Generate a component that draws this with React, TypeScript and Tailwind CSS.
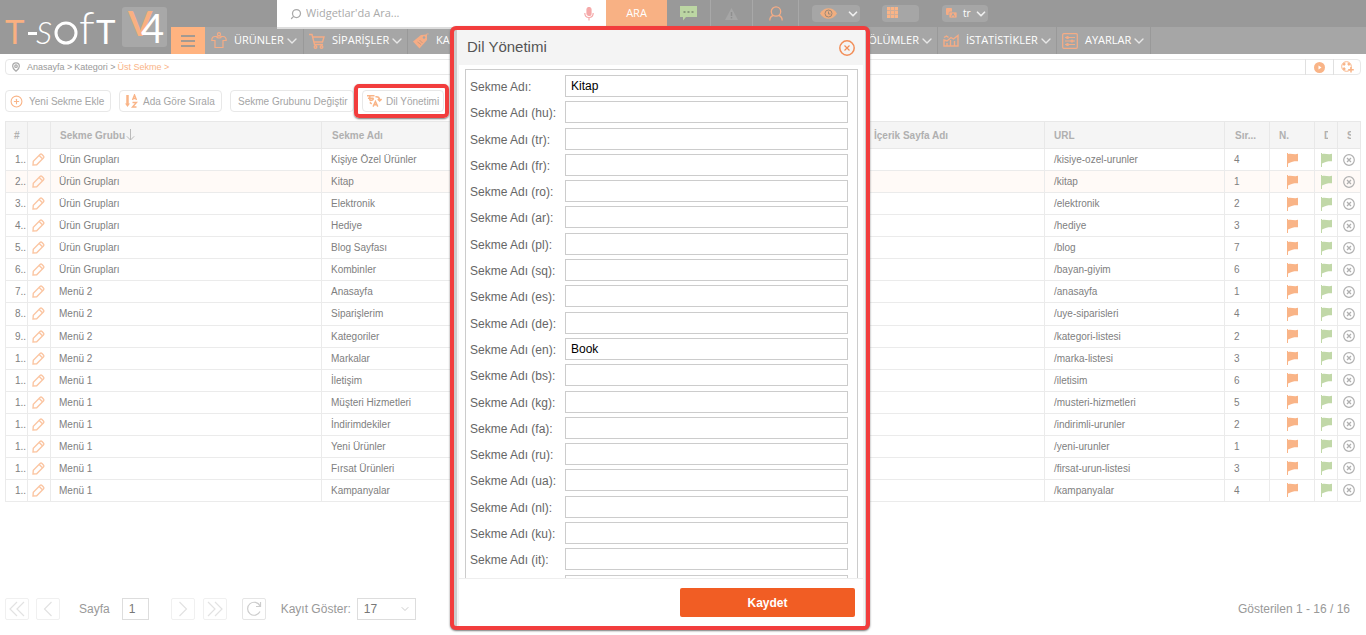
import { ReactNode } from "react";
import { Search, ChevronDown, CirclePlus, MapPin } from "lucide-react";

type Tab = { no: string; group: string; name: string; url: string; order: number };

const tabs: Tab[] = [
    { no: "1..", group: "Ürün Grupları", name: "Kişiye Özel Ürünler", url: "/kisiye-ozel-urunler", order: 4 },
    { no: "2..", group: "Ürün Grupları", name: "Kitap", url: "/kitap", order: 1 },
    { no: "3..", group: "Ürün Grupları", name: "Elektronik", url: "/elektronik", order: 2 },
    { no: "4..", group: "Ürün Grupları", name: "Hediye", url: "/hediye", order: 3 },
    { no: "5..", group: "Ürün Grupları", name: "Blog Sayfası", url: "/blog", order: 7 },
    { no: "6..", group: "Ürün Grupları", name: "Kombinler", url: "/bayan-giyim", order: 6 },
    { no: "7..", group: "Menü 2", name: "Anasayfa", url: "/anasayfa", order: 1 },
    { no: "8..", group: "Menü 2", name: "Siparişlerim", url: "/uye-siparisleri", order: 4 },
    { no: "9..", group: "Menü 2", name: "Kategoriler", url: "/kategori-listesi", order: 2 },
    { no: "1..", group: "Menü 2", name: "Markalar", url: "/marka-listesi", order: 3 },
    { no: "1..", group: "Menü 1", name: "İletişim", url: "/iletisim", order: 6 },
    { no: "1..", group: "Menü 1", name: "Müşteri Hizmetleri", url: "/musteri-hizmetleri", order: 5 },
    { no: "1..", group: "Menü 1", name: "İndirimdekiler", url: "/indirimli-urunler", order: 2 },
    { no: "1..", group: "Menü 1", name: "Yeni Ürünler", url: "/yeni-urunler", order: 1 },
    { no: "1..", group: "Menü 1", name: "Fırsat Ürünleri", url: "/firsat-urun-listesi", order: 3 },
    { no: "1..", group: "Menü 1", name: "Kampanyalar", url: "/kampanyalar", order: 4 },
];

const languages = ["", "hu", "tr", "fr", "ro", "ar", "pl", "sq", "es", "de", "en", "bs", "kg", "fa", "ru", "ua", "nl", "ku", "it", "bg"];
const values: Record<string, string> = { "": "Kitap", en: "Book" };

const Logo = () => (
    <svg width="171" height="54" viewBox="0 0 171 54" role="img" aria-label="T-Soft V4" fontFamily="Lato, sans-serif">
        <rect x="122" y="7" width="45" height="40" rx="3" fill="#a8a8a8" />
        <text x="5" y="44" fontSize="33" fill="#f9b081">T</text>
        <rect x="28" y="32" width="9" height="3" fill="#fff" />
        <text x="36" y="44" fontSize="32" fontStyle="italic" fontWeight="300" fill="#fff">S</text>
        <circle cx="66" cy="33" r="10" fill="none" stroke="#fff" strokeWidth="3" />
        <text x="79" y="44" fontSize="46" fontWeight="300" fill="#fff">f</text>
        <text x="96" y="44" fontSize="33" fill="#fff">T</text>
        <text>
            <tspan x="128" y="36" fontSize="35" fontWeight="700" fill="#f9b081">V</tspan>
            <tspan x="141" y="43" fontSize="40" fontWeight="400" fill="#fff">4</tspan>
        </text>
    </svg>
);

const ShirtIcon = () => (
    <svg width="16" height="17" viewBox="0 0 16 17" fill="none" stroke="#f5ac85" strokeWidth="1.2">
        <circle cx="8" cy="2.200" r="1.500" />
        <path d="M5.500 4.500H4C2 4.500.8 5.800.8 8.500H4v7h8v-7h3.200c0-2.700-1.200-4-3.200-4h-1.500c-.5 2-4.500 2-5 0zM5.500 4.500 8 3.700l2.500.8" />
    </svg>
);

const CartIcon = () => (
    <svg width="16" height="16" viewBox="0 0 16 16" fill="none" stroke="#f5ac85" strokeWidth="1.4">
        <path d="M0 1.500h3l2.500 10h8.500M3.800 4h11.200l-1.500 5H5" />
        <circle cx="6.500" cy="14" r="1.300" />
        <circle cx="12.500" cy="14" r="1.300" />
    </svg>
);

const TagIcon = () => (
    <svg width="16" height="16" viewBox="0 0 16 16">
        <path d="M0 8.500 8 2l6-.5L14 7l-7.500 8.500z" fill="#f5ac85" />
        <path d="m4.500 9 3.500 2.500M6.500 7l3 3" stroke="#c99a80" />
        <path d="M10.500 5.500c1-3 3-5 5-4.500" fill="none" stroke="#f5ac85" />
        <circle cx="11" cy="4.500" r="1.200" fill="#a6a6a6" />
    </svg>
);

const StatsIcon = () => (
    <svg width="16" height="13" viewBox="0 0 16 13" fill="none" stroke="#f5ac85" strokeWidth="1.4">
        <path d="M1 12h14V1.500L10.500 5 8 3.500 4 7 1 6z" />
        <path d="M1 3.500 3.500 2l2 1.500M4 12V9m3.500 3V6m4 6V7" />
    </svg>
);

const SettingsIcon = () => (
    <svg width="16" height="16" viewBox="0 0 16 16" fill="none" stroke="#f5ac85" strokeWidth="1.2">
        <rect x=".7" y=".7" width="14.600" height="14.600" rx="1" />
        <path d="M3 4.500h10M3 8h10M3 11.500h10" />
        <circle cx="5.500" cy="4.500" r="1" />
        <circle cx="10" cy="8" r="1" />
        <circle cx="5.500" cy="11.500" r="1" />
    </svg>
);

const TranslateIcon = () => (
    <svg width="15" height="14" viewBox="0 0 16 14" fill="none" stroke="#f9b487" strokeWidth="1.6">
        <path d="M0 1.500h8M1 4h6M3 1.500v5M3 6.500c3 0 4-1 3.500-2.500" />
        <path d="M9 2.500c3-.5 4.500 1 4.500 4M11.500 5l2 2 2-2M3 8.500 5 10" />
        <path d="m6.500 13 2.500-5.500L11.500 13M7.500 11h3" />
    </svg>
);

const SortIcon = () => (
    <svg width="13" height="14" viewBox="0 0 13 14" fill="none" stroke="#f9b487">
        <path d="M2.500 1v9" strokeWidth="2.500" />
        <path d="M0 9.500h5L2.500 13z" fill="#f9b487" stroke="none" />
        <path d="M7.500 6 9.500 1l2 5M8 4.500h3M7.500 8.500h4L7.500 13h4" strokeWidth="1.400" />
    </svg>
);

const PencilIcon = () => (
    <svg width="13" height="13" viewBox="0 0 13 13" fill="none" stroke="#fbc6a3" strokeWidth="1.400">
        <path d="m1 12 .3-3.700L8 1.600c.6-.6 1.400-.6 2 0l1.400 1.400c.6.600.6 1.400 0 2L4.700 11.700zM7.200 2.600l3.200 3.200" />
    </svg>
);

const FlagIcon = ({ color }: { color: string }) => (
    <svg width="11" height="14" viewBox="0 0 11 14" fill={color}>
        <path d="M0 0h1v14H0z" />
        <path d="M1 1C4-.2 7 2 11 .8v7.500C8 8 5 8.500 1 10.500z" />
    </svg>
);

const RemoveIcon = () => (
    <svg width="12" height="12" viewBox="0 0 12 12" fill="none" stroke="#b0b0b0">
        <circle cx="6" cy="6" r="5.300" strokeWidth="1.200" />
        <path d="m4 4 4 4m0-4L4 8" strokeWidth="1.300" />
    </svg>
);

const NavItem = ({ icon, label, className }: { icon?: ReactNode; label: string; className: string }) => (
    <a href="#" className={`flex shrink-0 items-center border-r border-[#999] text-[11px] font-medium text-white ${className}`}>
        {icon}
        <span className="ml-[7px]">{label}</span>
        <ChevronDown size={16} strokeWidth={2} className="shrink-0 text-[#e8e8e8]" />
    </a>
);

const Header = () => (
    <header className="flex h-[54px] bg-[#999] font-['Open_Sans',sans-serif]">
        <a href="#" className="w-[171px] shrink-0">
            <Logo />
        </a>
        <div className="flex min-w-0 flex-1 flex-col">
            <div className="flex h-[27px] items-start pl-[106px]">
                <div className="z-10 flex h-[29px] w-[329px] shrink-0 items-center border-b-2 border-[#ddd] bg-white pr-3 pl-[13px]">
                    <Search size={12} strokeWidth={2.5} className="-scale-x-100 text-[#aaa]" />
                    <input type="text" aria-label="Widget ara" placeholder="Widgetlar'da Ara..." className="ml-1 min-w-0 flex-1 text-[11px] outline-none placeholder:text-[#aaa]" />
                    <svg width="10" height="14" viewBox="0 0 10 14" fill="none" stroke="#f5a9a9" strokeWidth="1.200">
                        <rect x="3" y=".5" width="4" height="8" rx="2" fill="#f5a9a9" />
                        <path d="M.8 6c0 6 8.400 6 8.400 0M5 10.500v3" />
                    </svg>
                </div>
                <button className="h-[27px] w-[61px] shrink-0 bg-[#f8b184] text-[11px] font-medium text-white">ARA</button>
                <button aria-label="Mesajlar" className="flex h-[27px] w-11 shrink-0 items-center justify-center border-r border-[#a8a8a8]">
                    <svg width="17" height="15" viewBox="0 0 17 15">
                        <path d="M0 0h17v11H6l-3 3.500V11H0z" fill="#bcd6a3" />
                        <path d="M3.500 5h2v2h-2zM7.500 5h2v2h-2zM11.500 5h2v2h-2z" fill="#8a9a7c" />
                    </svg>
                </button>
                <button aria-label="Uyarılar" className="flex h-[27px] w-[42px] shrink-0 items-center justify-center border-r border-[#a8a8a8]">
                    <svg width="13" height="12" viewBox="0 0 13 12">
                        <path d="M6.500 0 13 12H0z" fill="#a6a6a6" />
                        <path d="M6.500 4v4M6.500 9v1.500" stroke="#8f8f8f" strokeWidth="1.500" />
                    </svg>
                </button>
                <button aria-label="Hesap" className="flex h-[27px] w-[46px] shrink-0 items-center justify-center border-r border-[#a8a8a8]">
                    <svg width="14" height="15" viewBox="0 0 14 15" fill="none" stroke="#f5ac85" strokeWidth="1.300">
                        <circle cx="7" cy="5.500" r="4.700" />
                        <path d="M.8 14.500c0-3 1.500-4.500 3.500-5m5.400 0c2 .5 3.500 2 3.500 5" />
                    </svg>
                </button>
                <button aria-label="Görünüm" className="mt-[5px] ml-[13px] flex h-[17px] w-12 shrink-0 items-center justify-between rounded-sm bg-[#a6a6a6] pl-2 text-white">
                    <svg width="17" height="11" viewBox="0 0 17 11">
                        <path d="M0 5.500C4-1.500 13-1.500 17 5.500c-4 7-13 7-17 0z" fill="#f0ae80" />
                        <circle cx="8.500" cy="5.500" r="3.500" fill="none" stroke="#9c8877" />
                        <path d="M8.500 3.500v2.500h2" fill="none" stroke="#9c8877" />
                    </svg>
                    <ChevronDown size={14} strokeWidth={3} className="text-[#eee]" />
                </button>
                <button aria-label="Widgetlar" className="mt-[5px] ml-[22px] flex h-[17px] w-[37px] shrink-0 items-start rounded-sm bg-[#a6a6a6] pt-0.5 pl-[5px]">
                    <svg width="11" height="11" viewBox="0 0 11 11" fill="#f9b487">
                        <path d="M0 0h11v11H0z" opacity=".5" />
                        <path d="M0 0h3v3H0zM4 0h3v3H4zM8 0h3v3H8zM0 4h3v3H0zM4 4h3v3H4zM8 4h3v3H8zM0 8h3v3H0zM4 8h3v3H4zM8 8h3v3H8z" />
                    </svg>
                </button>
                <button className="mt-[5px] ml-[23px] flex h-[17px] w-[46px] shrink-0 items-center rounded-sm bg-[#a6a6a6] pl-1 text-[10px] text-white">
                    <svg width="11" height="11" viewBox="0 0 11 11">
                        <rect width="6" height="7" rx="1" fill="#f5ac85" />
                        <rect x="3" y="4" width="8" height="6" rx="1" fill="#f5ac85" stroke="#a6a6a6" strokeWidth=".7" />
                        <path d="m5.500 8.500 1.500-3 1.500 3" fill="none" stroke="#a6a6a6" />
                    </svg>
                    <span className="ml-1.5">tr</span>
                    <ChevronDown size={14} strokeWidth={3} className="ml-auto text-[#eee]" />
                </button>
            </div>
            <nav className="flex h-[27px] overflow-hidden bg-[#a6a6a6]">
                <button aria-label="Menü" className="flex w-[34px] shrink-0 flex-col items-center justify-center gap-[3px] bg-[#ffb380]">
                    <span className="h-0.5 w-[14px] bg-[#a39a92]"></span>
                    <span className="h-0.5 w-[14px] bg-[#a39a92]"></span>
                    <span className="h-0.5 w-[14px] bg-[#a39a92]"></span>
                </button>
                <NavItem icon={<ShirtIcon />} label="ÜRÜNLER" className="w-[99px] pl-[6px]" />
                <NavItem icon={<CartIcon />} label="SİPARİŞLER" className="w-[104px] pl-[5px]" />
                <NavItem icon={<TagIcon />} label="KAMPANYALAR" className="w-[130px] pl-[5px]" />
                <NavItem label="BÖLÜMLER" className="w-[400px] justify-end pr-[2px]" />
                <NavItem icon={<StatsIcon />} label="İSTATİSTİKLER" className="w-[119px] pl-[5px]" />
                <NavItem icon={<SettingsIcon />} label="AYARLAR" className="w-[94px] pl-[5px]" />
            </nav>
        </div>
    </header>
);

const Breadcrumb = () => (
    <div className="mx-[5px] mt-[5px] flex h-4 items-center rounded-sm border border-[#e8e8e8] text-[9px] text-[#999]">
        <MapPin size={10} strokeWidth={3} className="ml-[5px] text-[#aaa]" />
        <div className="ml-1.5 flex flex-1 gap-0.5 pt-px">
            <a href="#">Anasayfa &gt;</a>
            <a href="#">Kategori &gt;</a>
            <a href="#" className="text-[#f9b487]">Üst Sekme &gt;</a>
        </div>
        <button aria-label="Video" className="flex h-4 w-[28px] items-center justify-center border-l border-[#e0e0e0]">
            <svg width="11" height="11" viewBox="0 0 11 11">
                <circle cx="5.500" cy="5.500" r="5.500" fill="#f9b487" />
                <path d="M4.500 3.500 7.500 5.500l-3 2z" fill="#fff" />
            </svg>
        </button>
        <button aria-label="Destek" className="flex h-4 w-[27px] items-center justify-center border-l border-[#e0e0e0]">
            <svg width="13" height="12" viewBox="0 0 13 12" fill="none" stroke="#f9b487">
                <circle cx="5.500" cy="5.500" r="4.800" />
                <path d="M2.300 2.300 4 4m4.700-1.700L7 4M2.300 8.700 4 7" strokeWidth="2.500" />
                <path d="M10 6v5.500M7.200 8.700h5.600" strokeWidth="1.500" />
            </svg>
        </button>
    </div>
);

const ToolButton = ({ icon, children, className }: { icon?: ReactNode; children: ReactNode; className: string }) => (
    <button className={`flex h-[22px] shrink-0 items-center rounded-sm border border-[#e8e8e8] text-[10px] whitespace-nowrap text-[#a5a5a5] ${className}`}>
        {icon}
        {children}
    </button>
);

const Toolbar = () => (
    <div className="mx-[5px] mt-[15px] flex gap-2">
        <ToolButton icon={<CirclePlus size={13} strokeWidth={2} className="text-[#f9b487]" />} className="w-[106px] gap-1.5 pl-1">Yeni Sekme Ekle</ToolButton>
        <ToolButton icon={<SortIcon />} className="w-[103px] gap-[5px] pl-[5px]">Ada Göre Sırala</ToolButton>
        <ToolButton className="w-[124px] pl-[7px]">Sekme Grubunu Değiştir</ToolButton>
        <div className="relative">
            <ToolButton icon={<TranslateIcon />} className="w-[82px] gap-1 pl-1">Dil Yönetimi</ToolButton>
            <div className="pointer-events-none absolute -top-[6px] -right-[5px] -bottom-[6px] -left-2 rounded-[5px] border-4 border-[#f23d3d] shadow-[0_1px_2px_#777]"></div>
        </div>
    </div>
);

const TabsTable = () => (
    <div className="mx-[5px] mt-[9px]">
        <table className="h-[381px] w-full table-fixed border-collapse text-left text-[10px] text-[#808080]">
            <colgroup>
                <col className="w-[22px]" />
                <col className="w-[23px]" />
                <col className="w-[271px]" />
                <col className="w-[271px]" />
                <col />
                <col className="w-[180px]" />
                <col className="w-[180px]" />
                <col className="w-[45px]" />
                <col className="w-[45px]" />
                <col className="w-[23px]" />
                <col className="w-[23px]" />
            </colgroup>
            <thead className="bg-[#f5f5f5] text-[#b0b0b0] [&_th]:overflow-hidden [&_th]:border [&_th]:border-[#e8e8e8] [&_th]:whitespace-nowrap">
                <tr className="h-[27px]">
                    <th className="pl-2">#</th>
                    <th></th>
                    <th className="pl-[9px]">
                        <span className="flex items-center">
                            Sekme Grubu
                            <svg width="9" height="12" viewBox="0 0 9 12" fill="none" stroke="#bbb" className="ml-px">
                                <path d="M4.500 0v11M.8 7.300l3.700 3.700 3.700-3.700" />
                            </svg>
                        </span>
                    </th>
                    <th className="pl-[10px]">Sekme Adı</th>
                    <th></th>
                    <th className="pl-[9px]">İçerik Sayfa Adı</th>
                    <th className="pl-[9px]">URL</th>
                    <th className="pl-[10px]">Sır...</th>
                    <th className="pl-[9px]">N.</th>
                    <th className="pl-[9px]"><span className="block w-1 overflow-hidden">D</span></th>
                    <th className="pl-[9px]"><span className="block w-1 overflow-hidden">S</span></th>
                </tr>
            </thead>
            <tbody className="[&_td]:border [&_td]:border-[#ebebeb] [&_td]:py-0">
                {tabs.map((tab, i) => (
                    <tr key={i} className={i === 1 ? "bg-[#fffaf7]" : ""}>
                        <td className="pl-[9px]">{tab.no}</td>
                        <td>
                            <button aria-label="Düzenle" className="mx-auto block pr-px"><PencilIcon /></button>
                        </td>
                        <td className="pl-2">{tab.group}</td>
                        <td className="pl-[9px]">{tab.name}</td>
                        <td></td>
                        <td></td>
                        <td className="pl-[9px]">{tab.url}</td>
                        <td className="pl-[9px]">{tab.order}</td>
                        <td>
                            <button aria-label="Durum" className="mx-auto block"><FlagIcon color="#f9b487" /></button>
                        </td>
                        <td>
                            <button aria-label="Dil durumu" className="mx-auto block"><FlagIcon color="#c1d8a8" /></button>
                        </td>
                        <td>
                            <button aria-label="Sil" className="mx-auto block"><RemoveIcon /></button>
                        </td>
                    </tr>
                ))}
            </tbody>
        </table>
    </div>
);

const PageButton = ({ label, path }: { label: string; path: string }) => (
    <button aria-label={label} className="flex h-[22px] w-6 items-center justify-center rounded-xs border border-[#f0f0f0]">
        <svg width="16" height="16" viewBox="0 0 16 16" fill="none" stroke="#e2e2e2" strokeWidth="1.200">
            <path d={path} />
        </svg>
    </button>
);

const Pager = () => (
    <footer className="mx-[5px] mt-auto mb-[15px] flex items-center text-[12px] text-[#999]">
        <div className="flex gap-[7px]">
            <PageButton label="İlk" path="M8 1 1 8l7 7M15 1 8 8l7 7" />
            <PageButton label="Önceki" path="M11.500 1 4.500 8l7 7" />
        </div>
        <label htmlFor="page" className="ml-[19px]">Sayfa</label>
        <input id="page" type="text" defaultValue="1" className="ml-3 h-[22px] w-[27px] border border-[#ddd] pl-1.5 text-[#777]" />
        <div className="ml-[22px] flex gap-2">
            <PageButton label="Sonraki" path="m4.500 1 7 7-7 7" />
            <PageButton label="Son" path="m1 1 7 7-7 7M8 1l7 7-7 7" />
        </div>
        <button aria-label="Yenile" className="ml-[15px] flex h-[22px] w-6 items-center justify-center rounded-xs border border-[#e5e5e5]">
            <svg width="16" height="16" viewBox="0 0 16 16" fill="none" stroke="#ccc" strokeWidth="1.200">
                <path d="M14 10.500A6.500 6.500 0 1 1 14 5M14.500 1v4.500H10" />
            </svg>
        </button>
        <label htmlFor="limit" className="ml-[15px]">Kayıt Göster:</label>
        <div className="relative ml-1.5">
            <select id="limit" className="block h-[22px] w-[59px] appearance-none border border-[#ddd] bg-white pl-1.5 text-[#777]">
                <option>17</option>
            </select>
            <ChevronDown size={12} strokeWidth={2} className="pointer-events-none absolute top-[5px] right-[5px] text-[#ccc]" />
        </div>
        <span className="mr-[11px] ml-auto">Gösterilen 1 - 16 / 16</span>
    </footer>
);

const LanguageModal = () => (
    <div role="dialog" aria-labelledby="modal-title" className="absolute top-[26px] left-[450px] z-20 flex h-[604px] w-[420px] flex-col rounded-md border-4 border-[#f23d3d] bg-[#ccc] pr-px pl-[3px] shadow-[0_1px_2px_#777]">
        <div className="flex min-h-0 flex-1 flex-col border-x-2 border-[#f4f4f4] bg-white">
            <div className="flex h-[35px] shrink-0 items-center justify-between bg-[#f4f4f4] px-2">
                <h2 id="modal-title" className="text-[15px] text-[#555]">Dil Yönetimi</h2>
                <button aria-label="Kapat" className="text-[#f28e58]">
                    <svg width="16" height="16" viewBox="0 0 16 16" fill="none" stroke="currentColor">
                        <circle cx="8" cy="8" r="7.200" strokeWidth="1.500" />
                        <path d="m5.500 5.500 5 5m0-5-5 5" strokeWidth="1.200" />
                    </svg>
                </button>
            </div>
            <div className="min-h-0 flex-1 overflow-hidden border-b border-[#eee] pt-1 pr-[5px] pl-[6px]">
                <form className="grid h-[533px] auto-rows-fr border border-[#ccc] px-1 pt-[5px]">
                    {languages.map((lang) => (
                        <div key={lang} className="flex items-start">
                            <label htmlFor={`tab-name-${lang}`} className="w-[95px] text-[12px] leading-[24px] text-[#666]">
                                {lang ? `Sekme Adı (${lang}):` : "Sekme Adı:"}
                            </label>
                            <input id={`tab-name-${lang}`} type="text" defaultValue={values[lang] || ""} className="mr-[5px] h-[22px] min-w-0 flex-1 border border-[#ccc] px-[5px] text-[12px] text-black" />
                        </div>
                    ))}
                </form>
            </div>
            <div className="flex h-[47px] shrink-0 items-start justify-end pt-[9px] pr-2">
                <button className="h-[29px] w-[175px] rounded-xs bg-[#f15d24] text-[12px] font-bold text-white">Kaydet</button>
            </div>
        </div>
    </div>
);

const App = () => {
    return (
        <div className="relative flex min-h-screen flex-col bg-white font-['Liberation_Sans',Arial,sans-serif]">
            <Header />
            <Breadcrumb />
            <Toolbar />
            <TabsTable />
            <Pager />
            <LanguageModal />
        </div>
    );
};

export default App;
